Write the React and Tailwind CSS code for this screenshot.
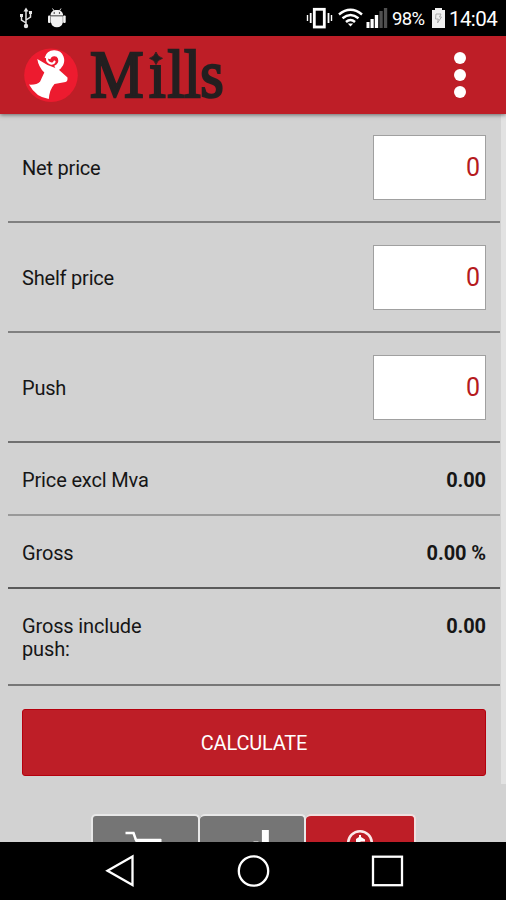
import React from "react";

function StatusBar() {
  return (
    <div className="flex h-9 shrink-0 items-center bg-black text-white">
      <svg className="h-9 w-20 shrink-0" viewBox="0 0 80 36" fill="none" stroke="#e4e4e4" strokeWidth="1.5">
        <path d="M26 11v14M26 23l-4.500-3v-4M26 20l4.500-3v-3.500" />
        <path d="M26 7.500l2.500 4h-5zM29 11h3v3h-3zM20 14h3v3h-3z" fill="#e4e4e4" stroke="none" />
        <circle cx="26" cy="26" r="2.200" fill="#e4e4e4" stroke="none" />
        <g fill="#f2f2f2" stroke="none">
          <path d="M50.500 15.500c0-3.500 2.500-5.500 6.300-5.500s6.300 2 6.300 5.500z" />
          <path d="M51 16.300h11.800v6.200q-1 4.700-5.900 4.700t-5.900-4.700z" />
          <rect x="48" y="15.500" width="2.600" height="7.500" rx="1" />
          <rect x="63.100" y="15.500" width="2.600" height="7.500" rx="1" />
        </g>
        <path d="M52.500 8.500l2 3M61 8.500l-2 3" strokeWidth="1" />
        <circle cx="54.200" cy="13" r=".7" fill="#000" stroke="none" />
        <circle cx="59.500" cy="13" r=".7" fill="#000" stroke="none" />
      </svg>
      <svg className="ml-[226px] h-9 w-[82px] shrink-0" viewBox="306 0 82 36" fill="none" stroke="#fff">
        <rect x="314.300" y="9.300" width="10" height="17.700" strokeWidth="2.800" />
        <path d="M310.700 13v10M328.500 13v10" strokeWidth="1.800" />
        <path d="M307.500 15v6M331.500 15v6" strokeWidth="1.400" />
        <path d="M339 14.500q11.500-9.500 23 0M342.500 18.300q8-6.600 16 0M346 22q4.500-4 9 0" strokeWidth="2.500" />
        <path d="M347.800 23.500h5.400l-2.700 3z" fill="#fff" stroke="none" />
        <g stroke="none" fill="#fff">
          <rect x="366.500" y="22" width="3" height="6" />
          <rect x="370.500" y="19" width="3.200" height="9" />
          <rect x="374.800" y="15" width="3.400" height="13" />
          <rect x="379.400" y="11" width="3.300" height="17" fill="#505050" />
          <rect x="383.900" y="8" width="3.300" height="20" fill="#505050" />
        </g>
      </svg>
      <span className="mt-0.5 ml-1 w-[35px] shrink-0 text-[18.5px] leading-9 tracking-[-0.6px]">98%</span>
      <svg className="ml-1 h-9 w-[18px] shrink-0" viewBox="431 0 18 36">
        <path d="M432 10h3V8h7v2h3v18h-13z" fill="#f0f0f0" />
        <path d="M436 14h5l-1.500 3h2l-4 6 .8-4h-2.800z" fill="none" stroke="#aaa" strokeWidth="1" />
      </svg>
      <span className="mt-0.5 text-[20.5px] leading-9 tracking-[-0.6px]">14:04</span>
    </div>
  );
}

function Header() {
  return (
    <header className="relative z-10 flex h-[78px] shrink-0 items-center justify-between bg-[#be1e27] shadow-[0_1px_4px_rgba(0,0,0,0.5)]">
      <svg className="h-[78px] w-[240px]" viewBox="0 36 240 78" role="img" aria-label="Mills">
        <circle cx="51" cy="75.300" r="26.800" fill="#ed1b2f" />
        <path
          d="M37.300 59L47.500 65L58 69L67.500 77.500Q67.800 81.600 65.500 82L54.500 84Q49.500 89.500 48.800 99Q36 97.500 29 84.600Q37 85 40 81.700L44.300 72.500Q38.500 67 37.300 59Z"
          fill="#fff"
        />
        <path d="M47.500 58.500C49.500 51.800 58.500 51.800 60.700 57.500C62.300 62 60 66.500 55.500 68.500" fill="none" stroke="#fff" strokeWidth="6" />
        <path d="M47 58.500C47 64 54 65 54.500 61.500" fill="none" stroke="#fff" strokeWidth="2.200" strokeLinecap="round" />
        <text
          x="100 165.500 186 204.500 222.500"
          y="97"
          transform="scale(.9 1)"
          fill="#231f20"
          stroke="#231f20"
          strokeWidth="2.400"
          className="font-['Liberation_Serif',serif] text-[67px]"
        >
          Mills
        </text>
        <rect x="148" y="46" width="17" height="17.500" fill="#be1e27" />
        <path d="M156 52q1.400 5 6.500 6.300-5.100 1.300-6.500 6.300-1.400-5-6.500-6.300 5.100-1.300 6.500-6.300z" fill="#231f20" stroke="#231f20" strokeWidth=".8" />
      </svg>
      <button aria-label="Menu" className="mr-10 flex flex-col gap-[5px]">
        <span className="size-3 rounded-full bg-white" />
        <span className="size-3 rounded-full bg-white" />
        <span className="size-3 rounded-full bg-white" />
      </button>
    </header>
  );
}

function InputRow({ label, className }) {
  return (
    <div className={`flex items-start justify-between border-b-2 px-3.5 ${className}`}>
      <label className="mt-[22px] text-[20px] leading-[23px] tracking-[-0.2px]">{label}</label>
      <input
        aria-label={label}
        defaultValue="0"
        className="h-[65px] w-[113px] border border-[#a0a0a0] bg-white pr-[5px] text-right text-[25px] text-[#b51a20] outline-none"
      />
    </div>
  );
}

function ResultRow({ label, value, className }) {
  return (
    <div className={`flex items-start justify-between border-b-2 px-3.5 ${className}`}>
      <span className="w-[150px] text-[20px] leading-[23px] tracking-[-0.15px]">{label}</span>
      <span className="text-[20px] leading-[23px] font-bold tracking-[-0.1px]">{value}</span>
    </div>
  );
}

function Tabs() {
  return (
    <div className="ml-[91px] flex h-7 w-[325px] overflow-hidden">
      <div className="h-10 w-[109px] rounded-t-[5px] border-2 border-b-0 border-[#e8e8e8] bg-[#757575]">
        <svg className="h-[27px] w-full" viewBox="93 815 104 27">
          <path d="M125 832h8l2.500 7h25" fill="none" stroke="#fff" strokeWidth="2.500" />
          <path d="M134 838h27v5h-25z" fill="#fff" />
        </svg>
      </div>
      <div className="h-10 w-[106px] rounded-t-[5px] border-2 border-b-0 border-l-0 border-[#e8e8e8] bg-[#757575]">
        <svg className="h-[27px] w-full" viewBox="199 815 105 27">
          <path d="M261.500 829h7v13h-7zM253 840.500h5v1.500h-5z" fill="#fff" />
        </svg>
      </div>
      <div className="h-10 w-[110px] rounded-t-[5px] border-2 border-b-0 border-l-0 border-[#f0dfdf] bg-[#be1e27]">
        <svg className="h-[27px] w-full" viewBox="306 815 108 27">
          <circle cx="360" cy="842" r="11.800" fill="none" stroke="#fbeaea" strokeWidth="2.500" />
          <path d="M359 834h2v2l4 2.500v2h-4.500v2h-4.500v-4.500l3-2z" fill="#fff" />
        </svg>
      </div>
    </div>
  );
}

function NavBar() {
  return (
    <nav className="h-[58px] shrink-0 bg-black">
      <svg className="h-[58px] w-full" viewBox="0 842 506 58" fill="none" stroke="#fff" strokeWidth="2.300">
        <path d="M132.500 856.500v28.500l-25-14.250z" />
        <circle cx="253.500" cy="871" r="14.700" />
        <rect x="373" y="856.700" width="29" height="28.500" />
      </svg>
    </nav>
  );
}

export default function App() {
  return (
    <div className="flex h-[900px] w-[506px] flex-col overflow-hidden bg-[#d2d2d2] font-[Roboto,sans-serif] text-[#161616]">
      <StatusBar />
      <Header />
      <main className="flex h-[670px] shrink-0 justify-between">
        <div className="ml-2 w-[492px]">
          <InputRow label="Net price" className="h-[109px] border-[#808080] pt-[21px]" />
          <InputRow label="Shelf price" className="h-[110px] border-[#808080] pt-[22px]" />
          <InputRow label="Push" className="h-[110px] border-[#707070] pt-[22px]" />
          <ResultRow label="Price excl Mva" value="0.00" className="h-[73px] border-[#999] pt-[26px]" />
          <ResultRow label="Gross" value="0.00 %" className="h-[73px] border-[#5a5a5a] pt-[26px]" />
          <ResultRow label="Gross include push:" value="0.00" className="h-[97px] border-[#777] pt-[26px]" />
          <button className="mt-[23px] ml-3.5 block h-[67px] w-[464px] rounded-[3px] border border-[#b5000d] bg-[#be1e27] text-[20px] tracking-[-0.2px] text-white">
            CALCULATE
          </button>
        </div>
        <div className="h-full w-[5px] bg-[#e2e2e2]" />
      </main>
      <div className="h-[58px] shrink-0 overflow-hidden pt-[30px]">
        <Tabs />
      </div>
      <NavBar />
    </div>
  );
}
